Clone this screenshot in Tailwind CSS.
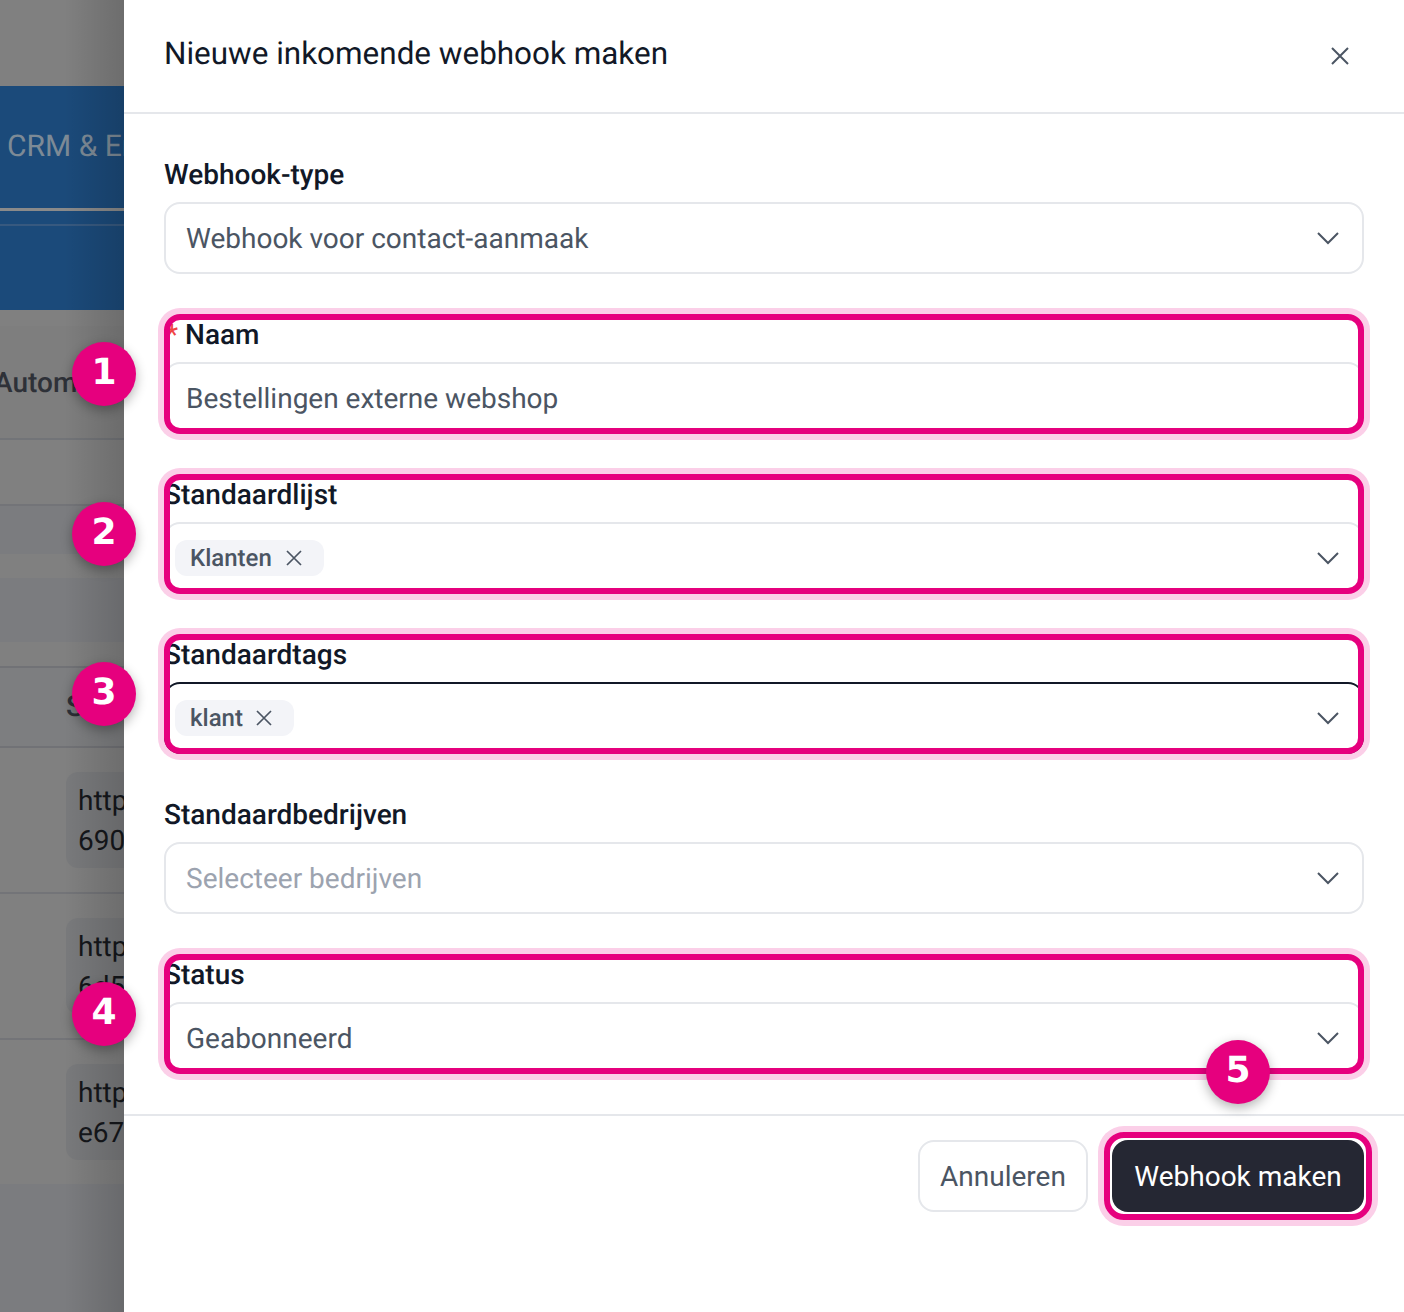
<!DOCTYPE html>
<html lang="nl">
<head>
  <meta charset="UTF-8">
  <title>Nieuwe inkomende webhook maken</title>
  <script src="https://cdn.jsdelivr.net/npm/@tailwindcss/browser@4"></script>
</head>
<body class="w-[1404px] h-[1312px] overflow-hidden bg-white font-['Roboto',sans-serif] [text-rendering:geometricPrecision]">
  <div class="relative flex h-[1312px] w-[1404px] overflow-hidden">

    <!-- page behind the overlay -->
    <div class="relative w-[124px] h-full shrink-0 overflow-hidden bg-[#808080]">
      <div class="absolute left-0 top-[86px] h-[224px] w-full bg-[#1b4a7a]">
        <div class="pl-[7px] pt-[43px] text-[30px] leading-[36px] text-[#7d8a96] whitespace-nowrap">CRM &amp; Email</div>
        <div class="absolute left-0 top-[122px] h-[3px] w-full bg-[#8a8a8a]"></div>
        <div class="absolute left-0 top-[138px] h-[2px] w-full bg-[#37597f]"></div>
      </div>
      <div class="absolute left-0 top-[326px] h-[114px] w-full border-b-2 border-[#727478] bg-[#7e7e7e]">
        <div class="absolute -left-[6px] top-[40px] text-[28px] leading-[34px] font-medium text-[#2e3138] whitespace-nowrap">Automatisering</div>
      </div>
      <div class="absolute left-0 top-[504px] h-[50px] w-full border-t-2 border-[#737478] bg-[#7b7c7f]"></div>
      <div class="absolute left-0 top-[578px] h-[64px] w-full bg-[#7b7c7f]"></div>
      <div class="absolute left-0 top-[666px] h-[82px] w-full border-y-2 border-[#717276] bg-[#7d7e80]">
        <div class="absolute left-[66px] top-[22px] text-[29px] leading-[34px] font-medium text-[#2e3138]">S</div>
      </div>
      <div class="absolute left-0 top-[892px] h-[2px] w-full bg-[#737478]"></div>
      <div class="absolute left-0 top-[1038px] h-[2px] w-full bg-[#737478]"></div>
      <div class="absolute left-[66px] top-[772px] h-[96px] w-[100px] rounded-xl bg-[#797a7c] px-3 py-[9px] text-[28px] leading-[40px] text-[#15171b]">http<br>690</div>
      <div class="absolute left-[66px] top-[918px] h-[96px] w-[100px] rounded-xl bg-[#797a7c] px-3 py-[9px] text-[28px] leading-[40px] text-[#15171b]">http<br>6d5</div>
      <div class="absolute left-[66px] top-[1064px] h-[96px] w-[100px] rounded-xl bg-[#797a7c] px-3 py-[9px] text-[28px] leading-[40px] text-[#15171b]">http<br>e67</div>
      <div class="absolute left-0 top-[1184px] h-[128px] w-full bg-[#7b7c7f]"></div>
      <div class="absolute inset-y-0 right-0 w-[60px] bg-gradient-to-r from-black/0 to-black/15"></div>
    </div>

    <!-- drawer -->
    <div class="flex h-full flex-1 flex-col bg-white">
      <div class="flex h-[114px] shrink-0 items-start justify-between border-b-2 border-[#e5e7eb] pl-[40px] pr-[52px]">
        <h1 class="pt-[34px] text-[31.44px] leading-[40px] text-[#111827]">Nieuwe inkomende webhook maken</h1>
        <svg class="mt-[44px]" width="24" height="24" viewBox="0 0 24 24" fill="none" stroke="#4b5563" stroke-width="2"><path d="M4 4l16 16M20 4L4 20"/></svg>
      </div>

      <div class="flex h-[1002px] shrink-0 flex-col gap-[40px] border-b-2 border-[#e5e7eb] px-[40px] pt-[40px]">
        <div class="h-[120px]">
          <label class="block h-[40px] text-[28px] leading-[41px] font-medium text-[#111827]">Webhook-type</label>
          <div class="mt-[8px] flex h-[72px] items-center justify-between rounded-2xl border-2 border-[#e5e7eb] pl-[20px] pr-[22px] text-[28px] text-[#4b5563]">
            <span class="pt-[2px]">Webhook voor contact-aanmaak</span>
            <svg width="24" height="14" viewBox="0 0 24 14" fill="none" stroke="#4b5563" stroke-width="2"><path d="M2 2l10 10L22 2"/></svg>
          </div>
        </div>

        <div class="relative h-[120px]">
          <label class="block h-[40px] pl-[2px] text-[28px] leading-[41px] font-medium text-[#111827]"><span class="mr-[7px] font-normal text-[#ef4444]">*</span>Naam</label>
          <div class="mt-[8px] flex h-[72px] items-center rounded-2xl border-2 border-[#e5e7eb] pl-[20px] pr-[22px] text-[28px] text-[#4b5563]"><span class="pt-[2px]">Bestellingen externe webshop</span></div>
          <div class="absolute inset-0 rounded-[16px] border-[6px] border-[#e6007e] shadow-[0_0_0_6px_#fbcfe8]"></div>
        </div>

        <div class="relative h-[120px]">
          <label class="block h-[40px] text-[28px] leading-[41px] font-medium text-[#111827]">Standaardlijst</label>
          <div class="mt-[8px] flex h-[72px] items-center justify-between rounded-2xl border-2 border-[#e5e7eb] pl-[9px] pr-[22px]">
            <span class="flex h-[36px] w-[149px] items-center gap-[14px] rounded-xl bg-[#f3f4f8] pl-[15px] text-[24px] font-medium text-[#4b5563]">Klanten
              <svg width="16" height="16" viewBox="0 0 16 16" fill="none" stroke="#4b5563" stroke-width="1.7"><path d="M1 1l14 14M15 1L1 15"/></svg>
            </span>
            <svg width="24" height="14" viewBox="0 0 24 14" fill="none" stroke="#4b5563" stroke-width="2"><path d="M2 2l10 10L22 2"/></svg>
          </div>
          <div class="absolute inset-0 rounded-[16px] border-[6px] border-[#e6007e] shadow-[0_0_0_6px_#fbcfe8]"></div>
        </div>

        <div class="relative h-[120px]">
          <label class="block h-[40px] text-[28px] leading-[41px] font-medium text-[#111827]">Standaardtags</label>
          <div class="mt-[8px] flex h-[72px] items-center justify-between rounded-2xl border-2 border-[#111827] pl-[9px] pr-[22px]">
            <span class="flex h-[36px] w-[119px] items-center gap-[13px] rounded-xl bg-[#f3f4f8] pl-[15px] text-[24px] font-medium text-[#4b5563]">klant
              <svg width="16" height="16" viewBox="0 0 16 16" fill="none" stroke="#4b5563" stroke-width="1.7"><path d="M1 1l14 14M15 1L1 15"/></svg>
            </span>
            <svg width="24" height="14" viewBox="0 0 24 14" fill="none" stroke="#4b5563" stroke-width="2"><path d="M2 2l10 10L22 2"/></svg>
          </div>
          <div class="absolute inset-0 rounded-[16px] border-[6px] border-[#e6007e] shadow-[0_0_0_6px_#fbcfe8]"></div>
        </div>

        <div class="h-[120px]">
          <label class="block h-[40px] text-[28px] leading-[41px] font-medium text-[#111827]">Standaardbedrijven</label>
          <div class="mt-[8px] flex h-[72px] items-center justify-between rounded-2xl border-2 border-[#e5e7eb] pl-[20px] pr-[22px] text-[28px] text-[#9ca3af]">
            <span class="pt-[2px]">Selecteer bedrijven</span>
            <svg width="24" height="14" viewBox="0 0 24 14" fill="none" stroke="#4b5563" stroke-width="2"><path d="M2 2l10 10L22 2"/></svg>
          </div>
        </div>

        <div class="relative h-[120px]">
          <label class="block h-[40px] text-[28px] leading-[41px] font-medium text-[#111827]">Status</label>
          <div class="mt-[8px] flex h-[72px] items-center justify-between rounded-2xl border-2 border-[#e5e7eb] pl-[20px] pr-[22px] text-[28px] text-[#4b5563]">
            <span class="pt-[2px]">Geabonneerd</span>
            <svg width="24" height="14" viewBox="0 0 24 14" fill="none" stroke="#4b5563" stroke-width="2"><path d="M2 2l10 10L22 2"/></svg>
          </div>
          <div class="absolute inset-0 rounded-[16px] border-[6px] border-[#e6007e] shadow-[0_0_0_6px_#fbcfe8]"></div>
        </div>
      </div>

      <div class="flex justify-end gap-[24px] pr-[40px] pt-[24px]">
        <button class="h-[72px] w-[170px] rounded-2xl border-2 border-[#e5e7eb] pt-[2px] text-[28px] text-[#4b5563]">Annuleren</button>
        <div class="relative">
          <button class="h-[72px] w-[252px] rounded-2xl bg-[#252733] pt-[2px] text-[28px] text-white">Webhook maken</button>
          <div class="absolute -inset-[8px] rounded-[20px] border-[6px] border-[#e6007e] shadow-[0_0_0_6px_#fbcfe8]"></div>
        </div>
      </div>
    </div>

    <!-- numbered markers -->
    <span class="absolute left-[72px] top-[342px] flex h-[64px] w-[64px] items-center justify-center rounded-full bg-[#e6007e] pb-[3px] font-['DejaVu_Sans',sans-serif] text-[36px] font-bold text-white shadow-[0_4px_12px_rgba(0,0,0,0.3)]">1</span>
    <span class="absolute left-[72px] top-[502px] flex h-[64px] w-[64px] items-center justify-center rounded-full bg-[#e6007e] pb-[3px] font-['DejaVu_Sans',sans-serif] text-[36px] font-bold text-white shadow-[0_4px_12px_rgba(0,0,0,0.3)]">2</span>
    <span class="absolute left-[72px] top-[662px] flex h-[64px] w-[64px] items-center justify-center rounded-full bg-[#e6007e] pb-[3px] font-['DejaVu_Sans',sans-serif] text-[36px] font-bold text-white shadow-[0_4px_12px_rgba(0,0,0,0.3)]">3</span>
    <span class="absolute left-[72px] top-[982px] flex h-[64px] w-[64px] items-center justify-center rounded-full bg-[#e6007e] pb-[3px] font-['DejaVu_Sans',sans-serif] text-[36px] font-bold text-white shadow-[0_4px_12px_rgba(0,0,0,0.3)]">4</span>
    <span class="absolute left-[1206px] top-[1040px] flex h-[64px] w-[64px] items-center justify-center rounded-full bg-[#e6007e] pb-[3px] font-['DejaVu_Sans',sans-serif] text-[36px] font-bold text-white shadow-[0_4px_12px_rgba(0,0,0,0.3)]">5</span>
  </div>
</body>
</html>
